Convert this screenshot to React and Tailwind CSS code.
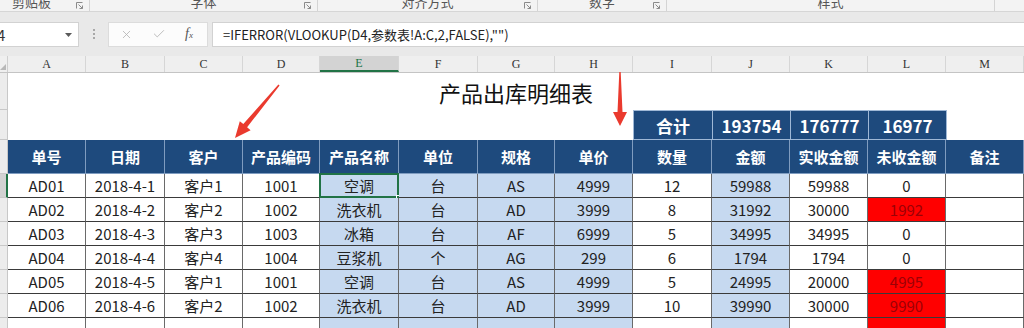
import React from "react";
import { X, Check } from "lucide-react";

// Excel sheet: 产品出库明细表
const GRID =
  "grid grid-cols-[8px_78px_79px_78px_77px_79px_79px_77px_78px_79px_78px_78px_78px_78px]";

const letters = "ABCDEFGHIJKLM".split("");
const headers = [
  "单号", "日期", "客户", "产品编码", "产品名称", "单位", "规格",
  "单价", "数量", "金额", "实收金额", "未收金额", "备注",
];
const rows = [
  ["AD01", "2018-4-1", "客户1", "1001", "空调", "台", "AS", "4999", "12", "59988", "59988", "0", ""],
  ["AD02", "2018-4-2", "客户2", "1002", "洗衣机", "台", "AD", "3999", "8", "31992", "30000", "1992", ""],
  ["AD03", "2018-4-3", "客户3", "1003", "冰箱", "台", "AF", "6999", "5", "34995", "34995", "0", ""],
  ["AD04", "2018-4-4", "客户4", "1004", "豆浆机", "个", "AG", "299", "6", "1794", "1794", "0", ""],
  ["AD05", "2018-4-5", "客户1", "1001", "空调", "台", "AS", "4999", "5", "24995", "20000", "4995", ""],
  ["AD06", "2018-4-6", "客户2", "1002", "洗衣机", "台", "AD", "3999", "10", "39990", "30000", "9990", ""],
  ["", "", "", "", "", "", "", "", "", "", "", "x", ""],
];
const blueCols = [4, 5, 6, 7, 9];

const groups = [
  { label: "剪贴板", w: "w-[90px]", pad: "pl-[12px] justify-start" },
  { label: "字体", w: "w-[228px]", pad: "justify-center" },
  { label: "对齐方式", w: "w-[220px]", pad: "justify-center" },
  { label: "数字", w: "w-[129px]", pad: "justify-center" },
  { label: "样式", w: "w-[328px]", pad: "justify-center", noLauncher: true },
];

const Launcher = () => (
  <svg width="7" height="7" viewBox="0 0 7 7" className="absolute right-[6px] top-[2px]">
    <path d="M0.5 6.5V0.5H6.5" fill="none" stroke="#8a8a8a" strokeWidth="1" />
    <path d="M2.5 2.5L6.5 6.5M6.5 3.5V6.5H3.5" fill="none" stroke="#8a8a8a" strokeWidth="1" />
  </svg>
);

const App = () => {
  return (
    <div className="relative w-[1024px] h-[328px] overflow-hidden bg-white font-['Noto_Sans_CJK_SC',sans-serif]">
      {/* Ribbon group labels (cut off at top, as in the screenshot) */}
      <div className="flex h-[12px] bg-[#f3f3f3] border-b border-[#d6d6d6] overflow-hidden">
        {groups.map((g) => (
          <div
            key={g.label}
            className={`relative flex ${g.w} ${g.pad} border-r border-[#d4d4d4] h-full`}
          >
            <span className="text-[13px] leading-[13px] -mt-[5px] text-[#555]">{g.label}</span>
            {!g.noLauncher && <Launcher />}
          </div>
        ))}
      </div>

      {/* Formula bar */}
      <div className="flex items-center h-[44px] bg-[#e9e9e9] py-[9px]">
        <div className="relative flex items-center w-[79px] h-[25px] bg-white border border-l-0 border-[#d2d2d2]">
          <span className="text-[15px] leading-none text-[#333] -ml-[3px]">4</span>
          <svg width="7" height="4" viewBox="0 0 7 4" className="absolute right-[6px] top-[10px]">
            <path d="M0 0H7L3.5 4Z" fill="#5a5a5a" />
          </svg>
        </div>
        <div className="flex flex-col items-center justify-center gap-[2px] w-[29px]">
          <span className="w-[2px] h-[2px] bg-[#a8a8a8]" />
          <span className="w-[2px] h-[2px] bg-[#a8a8a8]" />
          <span className="w-[2px] h-[2px] bg-[#a8a8a8]" />
        </div>
        <div className="flex items-center w-[100px] h-[25px] bg-[#fcfcfc] border border-[#dcdcdc]">
          <X className="ml-[11px] w-[13px] h-[13px] text-[#b3b3b3]" strokeWidth={1.5} />
          <Check className="ml-[19px] w-[14px] h-[14px] text-[#b3b3b3]" strokeWidth={1.5} />
          <span className="ml-[19px] italic font-['Liberation_Serif',serif] text-[14px] leading-none text-[#555]">
            f<span className="text-[9px]">x</span>
          </span>
        </div>
        <div className="flex items-center flex-1 ml-[4px] h-[25px] bg-white border border-r-0 border-[#d2d2d2] pl-[10px]">
          <span className="text-[13px] leading-none text-[#222]">
            =IFERROR(VLOOKUP(D4,参数表!A:C,2,FALSE),"")
          </span>
        </div>
      </div>

      {/* Column letters */}
      <div className={`${GRID} h-[17px] bg-[#efefef] border-b border-[#c4c4c4]`}>
        <div className="relative border-r border-[#cfcfcf]">
          <svg width="6" height="6" viewBox="0 0 6 6" className="absolute right-[1px] bottom-[2px]">
            <path d="M6 0V6H0Z" fill="#b8b8b8" />
          </svg>
        </div>
        {letters.map((l) => (
          <div
            key={l}
            className={`flex items-center justify-center border-r border-[#d6d6d6] font-['Liberation_Serif',serif] text-[12px] leading-none ${
              l === "E"
                ? "bg-[#d3d3d3] text-[#217346] border-b-2 border-b-[#217346]"
                : "text-[#333]"
            }`}
          >
            {l}
          </div>
        ))}
      </div>

      {/* Row 1: title */}
      <div className={`${GRID} h-[37px]`}>
        <div className="bg-[#ececec] border-r border-b border-[#c8c8c8]" />
        <div className="col-span-13 flex items-center justify-center text-[22px] leading-none text-[#111]">
          产品出库明细表
        </div>
      </div>

      {/* Row 2: totals */}
      <div className={`${GRID} h-[30px]`}>
        <div className="bg-[#ececec] border-r border-b border-[#c8c8c8]" />
        <div className="col-span-8" />
        {["合计", "193754", "176777", "16977"].map((v) => (
          <div
            key={v}
            className="flex items-center justify-center bg-[#1e4a7d] border-l border-t border-b border-[#9fb8d6] text-white font-bold text-[17px] leading-none"
          >
            {v}
          </div>
        ))}
        <div className="border-l border-[#9fb8d6]" />
      </div>

      {/* Header row */}
      <div className={`${GRID} h-[34px]`}>
        <div className="bg-[#ececec] border-r border-b border-[#c8c8c8]" />
        {headers.map((h) => (
          <div
            key={h}
            className="flex items-center justify-center bg-[#1e4a7d] border-r border-b border-[#7f9cc0] text-white font-bold text-[15px] leading-none"
          >
            {h}
          </div>
        ))}
      </div>

      {/* Data rows */}
      {rows.map((r, ri) => (
        <div key={ri} className={`${GRID} h-[24px]`}>
          <div
            className={`border-b border-[#c8c8c8] ${
              ri === 0 ? "bg-[#d2d2d2] border-r-2 border-r-[#217346]" : "bg-[#ececec] border-r"
            }`}
          />
          {r.map((v, ci) => {
            const red = ci === 11 && v !== "0";
            const bg = red ? "bg-[#ff0000]" : blueCols.includes(ci) ? "bg-[#c6d9f0]" : "bg-white";
            return (
              <div
                key={ci}
                className={`relative flex items-center justify-center ${bg} border-r border-b border-r-[#6a6a6a] border-b-[#3a3a3a] text-[15px] leading-none ${
                  red ? "text-[#9c0006]" : "text-[#222]"
                }`}
              >
                {v === "x" ? "" : v}
                {ri === 0 && ci === 4 && (
                  <>
                    <span className="absolute -left-px -top-px -right-px -bottom-px border-2 border-[#217346]" />
                    <span className="absolute -right-[4px] -bottom-[4px] w-[6px] h-[6px] bg-[#217346] border border-white" />
                  </>
                )}
              </div>
            );
          })}
        </div>
      ))}

      {/* Red annotation arrows */}
      <svg
        className="absolute left-0 top-0 pointer-events-none"
        width="1024"
        height="328"
        viewBox="0 0 1024 328"
      >
        <polygon
          points="278.4,84.5 279.6,85.5 247.1,127.3 250.6,130.2 235,138 239.8,121.2 243.3,124.1"
          fill="#ea3a2e"
        />
        <polygon
          points="619.3,72 620.7,72 622.5,112 627,112 620,126 613,112 617.5,112"
          fill="#ea3a2e"
        />
      </svg>
    </div>
  );
};

export default App;
